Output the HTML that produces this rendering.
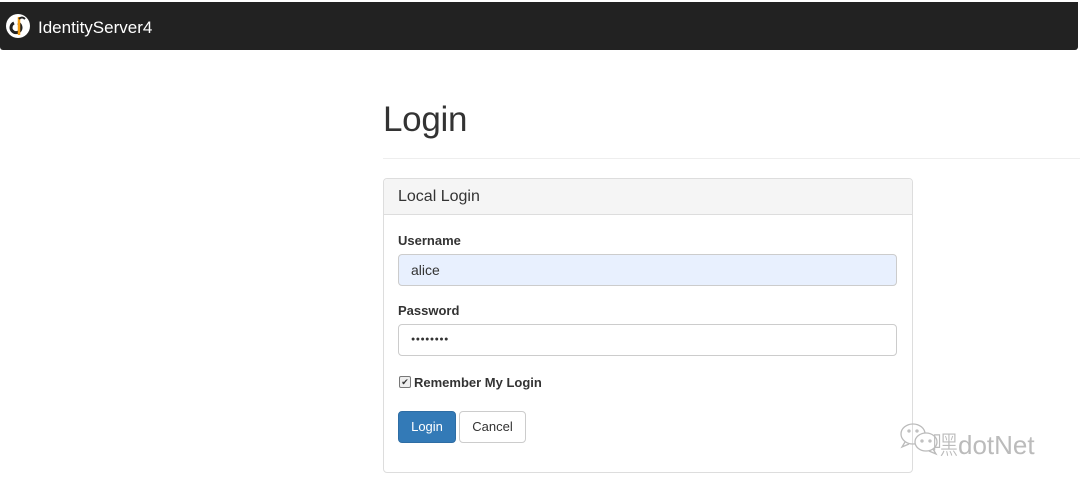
<!DOCTYPE html>
<html><head><style>
body{margin:0;width:1080px;height:488px;overflow:hidden;background:#fff;font-family:"Liberation Sans",sans-serif;color:#333;position:relative;font-size:14px}
.nav{position:absolute;left:0;top:2px;width:1078px;height:48px;background:#222;border-radius:0 0 3px 3px}
.brand{position:absolute;left:38px;top:16px;color:#fff;font-size:17px}
h1{position:absolute;left:383px;top:100px;margin:0;font-size:35px;font-weight:500;line-height:40px;letter-spacing:-0.3px}
.hr{position:absolute;left:383px;top:158px;width:697px;height:1px;background:#eee}
.panel{position:absolute;left:383px;top:178px;width:528px;height:293px;border:1px solid #ddd;border-radius:4px}
.ph{height:35px;background:#f5f5f5;border-bottom:1px solid #ddd;font-size:16px;line-height:36px;padding-left:14px;border-radius:4px 4px 0 0}
label{position:absolute;left:14px;font-weight:bold;font-size:13px}
.in{position:absolute;left:14px;height:30px;border:1px solid #ccc;border-radius:4px;font-size:14px;line-height:30px;padding-left:12px;width:485px}
.btn{position:absolute;top:232px;height:30px;border-radius:4px;line-height:30px;font-size:14px;text-align:center}
</style></head><body>
<div class="nav">
<svg style="position:absolute;left:5px;top:11px" width="26" height="26" viewBox="0 0 26 26"><circle cx="13" cy="13" r="12" fill="#fff"/><path d="M9 10a5 5 0 1 0 4 0" stroke="#222" stroke-width="3" fill="none"/><path d="M14 4v18" stroke="#f39c12" stroke-width="2.5"/><path d="M14 6q3-3 6 0" stroke="#222" stroke-width="2" fill="none"/></svg>
<div class="brand">IdentityServer4</div></div>
<h1>Login</h1>
<div class="hr"></div>
<div class="panel">
<div class="ph">Local Login</div>
<label style="top:54px">Username</label>
<div class="in" style="top:75px;background:#e8f0fe">alice</div>
<label style="top:124px">Password</label>
<div class="in" style="top:145px;font-size:7px;letter-spacing:0.5px">●●●●●●●●</div>
<div style="position:absolute;left:15px;top:197px;width:10px;height:10px;border:1px solid #777;border-radius:2px;background:#eee;font-size:9px;line-height:10px;text-align:center">✔</div>
<label style="top:196px;left:30px">Remember My Login</label>
<div class="btn" style="left:14px;width:56px;background:#337ab7;border:1px solid #2e6da4;color:#fff;font-size:13px">Login</div>
<div class="btn" style="left:75px;width:65px;border:1px solid #ccc;color:#333;font-size:13px">Cancel</div>
</div>
<svg style="position:absolute;left:899px;top:422px" width="44" height="36" viewBox="0 0 44 36" fill="none" stroke="#bbb" stroke-width="1.3"><ellipse cx="14" cy="12" rx="12" ry="10"/><path d="M6 20l-3 5 7-3"/><ellipse cx="27" cy="20" rx="11" ry="9" fill="#fff"/><path d="M34 27l3 5-7-3"/><circle cx="10" cy="9" r="1"/><circle cx="18" cy="9" r="1"/><circle cx="23" cy="19" r="1"/><circle cx="31" cy="19" r="1"/></svg>
<div style="position:absolute;left:932px;top:425px;font-size:26px;color:#bbb;font-family:'Liberation Sans','Noto Sans CJK SC',sans-serif;font-weight:300">嘿dotNet</div>
</body></html>
